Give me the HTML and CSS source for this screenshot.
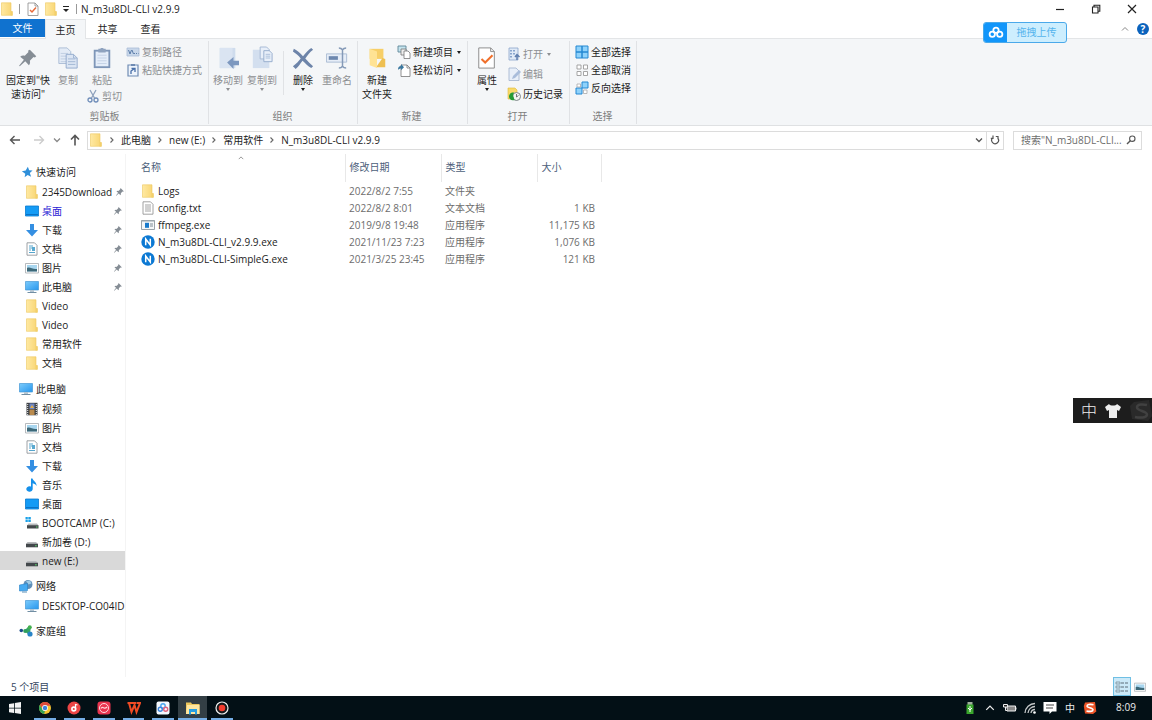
FILE: index.html
```html
<!DOCTYPE html>
<html lang="zh-CN">
<head>
<meta charset="utf-8">
<title>N_m3u8DL-CLI v2.9.9</title>
<link rel="stylesheet" href="styles.css">
</head>
<body>
<svg class="sprite" aria-hidden="true">
  <defs>
    <linearGradient id="gFolder" x1="0" x2="1"><stop offset="0" stop-color="#ffe9a2"/><stop offset="1" stop-color="#f8d572"/></linearGradient>
    <linearGradient id="gScreen" x1="0" y1="0" x2="1" y2="1"><stop offset="0" stop-color="#7ccbfb"/><stop offset="1" stop-color="#2797ee"/></linearGradient>
  </defs>
  <symbol id="folder" viewBox="0 0 14 14"><path d="M1.500 .8h9.500v8.700H12.300V13.300H1.500z" fill="url(#gFolder)" stroke="#ecc75f" stroke-width=".6"/><path d="M10.500 9.500h2v4h-2z" fill="#f3cf6a"/></symbol>
  <symbol id="bigfolder" viewBox="0 0 24 24"><path d="M4 2h15v11H4z" fill="#f7cf68"/><path d="M18 12l3 1v9H11z" fill="#eebf51"/><path d="M4 2l8 3v18l-8-3z" fill="#ffe394"/></symbol>
  <symbol id="doccheck" viewBox="0 0 14 14"><path d="M2 1h7l3 3v9.500H2z" fill="#fff" stroke="#8b8b8b" stroke-width=".8"/><path d="M9 1v3h3" fill="none" stroke="#8b8b8b" stroke-width=".8"/><path d="M4 8l2 2 4-4.500" fill="none" stroke="#e86a3a" stroke-width="1.500"/></symbol>
  <symbol id="bigcheck" viewBox="0 0 24 24"><path d="M3 1h13l4 4v18H3z" fill="#fff" stroke="#858585"/><path d="M16 1v4h4" fill="none" stroke="#858585"/><path d="M6 13l4 4 8-8" fill="none" stroke="#f0702c" stroke-width="2.200"/></symbol>
  <symbol id="pin" viewBox="0 0 24 24"><path d="M14 3l7 7-1.500 1.500-1.500-.5-4 4c.6 2 .2 3.500-1 5l-4-4.500L3 21l-.7-.6L7.500 14 3.500 10.500c1.500-1.200 3-1.500 5-1l4-4-.5-1.500z" fill="#858d95"/></symbol>
  <symbol id="copy" viewBox="0 0 24 24"><path d="M2 1h9l4 4v13H2z" fill="#e3ebf6" stroke="#a9bbd4"/><path d="M4 7h8M4 10h8M4 13h8M4 16h8" stroke="#bccce0"/><path d="M10 8h8l4 4v11H10z" fill="#dbe5f3" stroke="#91a9cc"/><path d="M18 8v4h4M12 13h8M12 16h8M12 19h8" fill="none" stroke="#9fb5d3"/></symbol>
  <symbol id="paste" viewBox="0 0 24 24"><path d="M3 3h18v20H3z" fill="#7e96b8"/><path d="M5 5h14v16H5z" fill="#e4edf9"/><path d="M8 2h2l1-1h2l1 1h2v4H8z" fill="#8fa3bf"/><path d="M7 9h10M7 12h10M7 15h10M7 18h10" stroke="#c3d1e5"/></symbol>
  <symbol id="cut" viewBox="0 0 14 14"><path d="M4 1l4.500 8M10 1L5.500 9" stroke="#8fa2bd" stroke-width="1.300" fill="none"/><circle cx="4" cy="11" r="2" fill="none" stroke="#6f8db9" stroke-width="1.300"/><circle cx="10" cy="11" r="2" fill="none" stroke="#6f8db9" stroke-width="1.300"/></symbol>
  <symbol id="path" viewBox="0 0 14 14"><path d="M1 3h12v8H1z" fill="#c8d7ea" stroke="#a9bdd7" stroke-width=".8"/><path d="M2.500 5l1.500 4 1.500-4M6 5l1.500 4M8 8.500h1M10 8.500h1M12 8.500h.5" fill="none" stroke="#5c7da9"/></symbol>
  <symbol id="pastelink" viewBox="0 0 14 14"><path d="M2 2h10v11H2z" fill="#eef4fc" stroke="#6f8bb3" stroke-width="1.200"/><path d="M5 1h4v2H5z" fill="#6f8bb3"/><path d="M5 11V8l3-2M5.500 5.500H9V9" fill="none" stroke="#486fa8" stroke-width="1.300"/></symbol>
  <symbol id="moveto" viewBox="0 0 24 24"><path d="M3 1h17v22H3z" fill="#cfdced"/><path d="M3 1h14v22H3z" fill="#dae4f2"/><path d="M11 17l7-6v4h6v5h-6v4z" fill="#7d98bf"/></symbol>
  <symbol id="copyto" viewBox="0 0 24 24"><path d="M2 3h18v20H2z" fill="#d3dfef"/><path d="M10 0h7l3 3v10H10z" fill="#e8eff9" stroke="#a3b7d3"/><path d="M14 4h6l3 3v9h-9z" fill="#e8eff9" stroke="#94abcc"/><path d="M16 8h5M16 10h5M16 12h5" stroke="#a9bdd9"/></symbol>
  <symbol id="delete" viewBox="0 0 24 24"><path d="M2 2c4 2 7 5 10 8 3-4 6-7 9-9l2 2c-4 3-6 6-8.500 9.500 3 3 5 5.500 8.500 8.500l-2 2c-4-2-6-5-9.500-8-2.500 3-4 6-7.500 9l-3-3c4-3 6-5.500 8.500-8.500C7 9 4 7 1 5z" fill="#6d84a9"/></symbol>
  <symbol id="rename" viewBox="0 0 24 24"><path d="M.5 7.500h22v9H.5z" fill="#e6edf7" stroke="#a9bad2"/><path d="M3 10h10v4H3z" fill="#6d88af"/><path d="M14 1c2 0 3 .5 4 2 1-1.500 2-2 4-2M18 3v18M14 23c2 0 3-.5 4-2 1 1.500 2 2 4 2" fill="none" stroke="#8499b7" stroke-width="1.600"/></symbol>
  <symbol id="newitem" viewBox="0 0 14 14"><path d="M1 1h8v6H1z" fill="#c5e4ee" stroke="#5e8797" stroke-width=".9"/><path d="M4 4h5v6H4z" fill="#eee" stroke="#777" stroke-width=".8"/><path d="M7 6h4l2 2v5.500H7z" fill="#fff" stroke="#777" stroke-width=".8"/></symbol>
  <symbol id="easy" viewBox="0 0 14 14"><path d="M4 2h6l3 3v8.500H4z" fill="#fff" stroke="#777" stroke-width=".8"/><path d="M10 2v3h3" fill="none" stroke="#777" stroke-width=".8"/><path d="M1 7c0-3 1-4 3-4V1l3 3.200-3 3V5.500C2.500 5.500 2 6 1 7z" fill="#3a789f"/></symbol>
  <symbol id="openapp" viewBox="0 0 14 14"><path d="M2 1h9v12H2z" fill="#e0eaf7" stroke="#8ba5ca" stroke-width=".8"/><path d="M4 3v8M7 3v6" stroke="#6c8fc0" stroke-width="1.500" stroke-dasharray="1.500 1.500"/><path d="M10 13V8M8 10l2-2.500 2.500 2.500" fill="none" stroke="#607fae" stroke-width="1.500"/></symbol>
  <symbol id="edit" viewBox="0 0 14 14"><path d="M2 1h7l3 3v9.500H2z" fill="#e8eff9" stroke="#9fb1cd" stroke-width=".8"/><path d="M5 12l1-3 6-6 2 2-6 6z" fill="#a9bddb"/></symbol>
  <symbol id="history" viewBox="0 0 14 14"><path d="M1 1h7l2 2v9H1z" fill="#f8da69" stroke="#dfb83b" stroke-width=".6"/><circle cx="9.500" cy="9.500" r="4" fill="#f3f5f3" stroke="#7c8487"/><path d="M9.500 7v3l2-1.500" fill="none" stroke="#666" stroke-width=".9"/><path d="M2 10c0-4 3-5 5-4.500L6 8l1.500 5C4 14 2.500 12 2 10z" fill="#259b35"/></symbol>
  <symbol id="selall" viewBox="0 0 14 14"><g fill="#8fd2fb" stroke="#2588d2"><path d="M1 1h6v6H1zM7 1h6v6H7zM1 7h6v6H1zM7 7h6v6H7z"/></g></symbol>
  <symbol id="selnone" viewBox="0 0 14 14"><path d="M2 2h4v4H2zM8.500 2h4v4h-4zM2 8.500h4v4H2zM8.500 8.500h4v4h-4z" fill="#fff" stroke="#9b9b9b" stroke-width=".9"/></symbol>
  <symbol id="selinv" viewBox="0 0 14 14"><path d="M7 1h6v6H7zM1 7h6v6H1z" fill="#8fd2fb" stroke="#2588d2"/><path d="M2 3h3.500v3H2zM8.500 9H12v3.500H8.500z" fill="#fff" stroke="#aaa" stroke-width=".8"/></symbol>
  <symbol id="left" viewBox="0 0 12 12"><path d="M11 6H1.500M5.500 2l-4 4 4 4" fill="none" stroke="currentColor" stroke-width="1.400"/></symbol>
  <symbol id="right" viewBox="0 0 12 12"><path d="M1 6h9.500M6.500 2l4 4-4 4" fill="none" stroke="currentColor" stroke-width="1.400"/></symbol>
  <symbol id="up" viewBox="0 0 12 12"><path d="M6 11.500V1.500M2 5.500l4-4 4 4" fill="none" stroke="currentColor" stroke-width="1.600"/></symbol>
  <symbol id="chev" viewBox="0 0 8 8"><path d="M1 2.500l3 3 3-3" fill="none" stroke="currentColor" stroke-width="1.300"/></symbol>
  <symbol id="chevup" viewBox="0 0 8 8"><path d="M1 5.500l3-3 3 3" fill="none" stroke="currentColor"/></symbol>
  <symbol id="crumb" viewBox="0 0 8 8"><path d="M2.500 1.500L5 4 2.500 6.500" fill="none" stroke="#666" stroke-width="1.100"/></symbol>
  <symbol id="refresh" viewBox="0 0 10 10"><path d="M7.800 3.200A3.400 3.400 0 1 1 3 2.600M3 .5v2.800H.8M5.800 1.500H8v2.700" fill="none" stroke="#555" stroke-width="1.200"/></symbol>
  <symbol id="search" viewBox="0 0 10 10"><circle cx="6.300" cy="3.700" r="2.700" fill="none" stroke="#555" stroke-width="1.100"/><path d="M4.300 5.700L1 9" stroke="#555" stroke-width="1.400"/></symbol>
  <symbol id="star" viewBox="0 0 14 14"><path d="M8 1l1.500 4 4 .3-3.200 2.800 1.500 4.400-4-2-3.600 2.700.8-4.300L1 6l4.500-.8z" fill="#2f8fd9"/></symbol>
  <symbol id="desktop" viewBox="0 0 14 14"><path d="M.5 2h13v10H.5z" fill="#149bf5" stroke="#0878ce" stroke-width=".8"/><path d="M1 10.500h12" stroke="#0b72c4"/></symbol>
  <symbol id="down" viewBox="0 0 14 14"><path d="M5 1h4v6h4l-6 6.500L1 7h4z" fill="#348fe2"/></symbol>
  <symbol id="docs" viewBox="0 0 14 14"><path d="M2 .8h7.500L12 3.300V13.200H2z" fill="#fff" stroke="#858c91" stroke-width=".8"/><path d="M4 4h4M4 6h6M4 8h2M4 10.500h6" stroke="#56a5cc"/><path d="M7 5h3v4H7z" fill="#59a9d0"/></symbol>
  <symbol id="pics" viewBox="0 0 14 14"><path d="M.5 2.500h13v9.500H.5z" fill="#fff" stroke="#a4a9ad" stroke-width=".8"/><path d="M2 4h10v6.500H2z" fill="#a8d6ef"/><path d="M2 7c3-1.500 5 1.500 10 1v2.500H2z" fill="#3d6979"/></symbol>
  <symbol id="pc" viewBox="0 0 14 14"><path d="M.5 1.500h13v8.500H.5z" fill="url(#gScreen)" stroke="#4598d5" stroke-width=".7"/><path d="M5 10h4v2H5z" fill="#b5c6d3"/><path d="M2.500 12.500h9" stroke="#718ea3"/></symbol>
  <symbol id="video" viewBox="0 0 14 14"><path d="M1.500 .8h11v12.500h-11z" fill="#3d4044"/><path d="M2.700 2v11M11.300 2v11" stroke="#eee" stroke-dasharray="1 1"/><path d="M4.500 1.500h5V7h-5z" fill="#6c86c5"/><path d="M4.500 7.500h5V13h-5z" fill="#b98a4d"/><path d="M5 6l2-3 2 3z" fill="#e1ad47"/></symbol>
  <symbol id="music" viewBox="0 0 14 14"><path d="M6 .5h1.500c.5 2.500 4.500 3.500 4 7.500-.5-1.500-2-2.300-3.800-2.700v5.500A3.200 2.800 0 1 1 6 8.500z" fill="#1590ea"/></symbol>
  <symbol id="drive" viewBox="0 0 14 14"><path d="M2.500 7h8.500l2 2H1z" fill="#b7babc"/><path d="M1 8.800h12V12.300H1z" fill="#43484b"/><path d="M10 10.800h1.800" stroke="#59d36b"/></symbol>
  <symbol id="windrive" viewBox="0 0 14 14"><path d="M.5 1h2.300v2.300H.5zM3.300 1h2.500v2.300H3.300zM.5 3.800h2.300v2.300H.5zM3.300 3.800h2.500v2.300H3.300z" fill="#1aa1e8"/><path d="M3.500 7.500H12l1.500 2H2z" fill="#b7babc"/><path d="M2 9.200h11.500v3.300H2z" fill="#43484b"/><path d="M11 11h1.500" stroke="#59d36b"/></symbol>
  <symbol id="net" viewBox="0 0 14 14"><circle cx="9" cy="5.500" r="4.500" fill="#5f8fb8"/><path d="M7 2l4-.5 1.500 3-3 1z" fill="#9fcbe6"/><path d="M.5 6l8-1.500v7l-8 .5z" fill="#45aaf1" stroke="#2581c7" stroke-width=".6"/><path d="M3 13h5" stroke="#5a90b8"/></symbol>
  <symbol id="home" viewBox="0 0 14 14"><circle cx="2.300" cy="6.500" r="1.800" fill="#1c4c8c"/><path d="M5 7l5-5 2 1.500L10.500 11z" fill="#36a564"/><circle cx="10.800" cy="3.300" r="2" fill="#45b04f"/><circle cx="6.200" cy="7" r="2" fill="#2f9e5d"/><circle cx="11" cy="10" r="2.600" fill="#2884c7"/></symbol>
  <symbol id="txt" viewBox="0 0 14 14"><path d="M2 .8h7.500L12 3.300V13.200H2z" fill="#fff" stroke="#8c8c8c" stroke-width=".8"/><path d="M4 4h6M4 6h6M4 8h6M4 10h6" stroke="#999" stroke-width=".9"/></symbol>
  <symbol id="exe" viewBox="0 0 14 14"><path d="M.5 2.500h13v9H.5z" fill="#f5f7f8" stroke="#8e989f" stroke-width=".9"/><path d="M.5 3h13" stroke="#9ba5ab"/><path d="M4 4.800h4v5H4z" fill="#187acb"/><path d="M9 6h3M9 8h3" stroke="#7e8c96"/></symbol>
  <symbol id="nexe" viewBox="0 0 14 14"><circle cx="7" cy="7" r="6.700" fill="#0c79d3"/><path d="M4.700 10.200V4l4.600 6V3.800" fill="none" stroke="#fff" stroke-width="1.500"/></symbol>
  <symbol id="cloud" viewBox="0 0 18 14"><g fill="none" stroke="#fff" stroke-width="2"><circle cx="9" cy="4.500" r="3"/><circle cx="4.800" cy="9" r="3"/><circle cx="13.200" cy="9" r="3"/></g></symbol>
</svg>

<header class="titlebar">
  <svg class="i14"><use href="#folder"/></svg>
  <span class="tsep"></span>
  <button class="bare" aria-label="属性"><svg class="i14"><use href="#doccheck"/></svg></button>
  <button class="bare" aria-label="新建文件夹"><svg class="i14"><use href="#folder"/></svg></button>
  <button class="bare qa" aria-label="自定义快速访问工具栏"><svg class="i8" viewBox="0 0 8 8"><path d="M1 1.500h6" stroke="#222"/><path d="M1 4h6L4 7z" fill="#222"/></svg></button>
  <span class="tsep tsep-end"></span>
  <h1 class="title">N_m3u8DL-CLI v2.9.9</h1>
  <div class="winctl">
    <button class="bare" aria-label="最小化"><svg class="i10" viewBox="0 0 10 10"><path d="M1 5.500h8" stroke="#222" stroke-width="1.200"/></svg></button>
    <button class="bare" aria-label="还原"><svg class="i10" viewBox="0 0 10 10"><path d="M1.500 3h5.500v6H1.500zM3 3V1.200h5.800v6H7" fill="none" stroke="#222" stroke-width="1.100"/></svg></button>
    <button class="bare" aria-label="关闭"><svg class="i10" viewBox="0 0 10 10"><path d="M1 1l8 8M9 1L1 9" stroke="#222" stroke-width="1.200"/></svg></button>
  </div>
</header>

<nav class="tabs">
  <button class="tab file">文件</button>
  <button class="tab active">主页</button>
  <button class="tab">共享</button>
  <button class="tab">查看</button>
  <div class="tabs-end">
    <button class="bare" aria-label="折叠功能区"><svg class="i8 grey"><use href="#chevup"/></svg></button>
    <button class="help" aria-label="帮助">?</button>
  </div>
  <button class="upload"><span class="upload-logo"><svg class="i-cloud"><use href="#cloud"/></svg></span><span class="upload-text">拖拽上传</span></button>
</nav>

<section class="ribbon">
  <div class="group g-clip">
    <div class="tools">
      <button class="big w48"><svg class="i22"><use href="#pin"/></svg><span>固定到"快<br>速访问"</span></button>
      <button class="big off w32"><svg class="i22"><use href="#copy"/></svg><span>复制</span></button>
      <div class="stack">
        <button class="big off w36"><svg class="i22"><use href="#paste"/></svg><span>粘贴</span></button>
        <button class="small off"><svg class="i14"><use href="#cut"/></svg>剪切</button>
      </div>
      <div class="list">
        <button class="small off"><svg class="i14"><use href="#path"/></svg>复制路径</button>
        <button class="small off"><svg class="i14"><use href="#pastelink"/></svg>粘贴快捷方式</button>
      </div>
    </div>
    <div class="glabel">剪贴板</div>
  </div>
  <div class="group g-org">
    <div class="tools">
      <button class="big off w34"><svg class="i22"><use href="#moveto"/></svg><span>移动到</span><i class="caret"></i></button>
      <button class="big off w34"><svg class="i22"><use href="#copyto"/></svg><span>复制到</span><i class="caret"></i></button>
      <span class="vsep"></span>
      <button class="big w34"><svg class="i22"><use href="#delete"/></svg><span>删除</span><i class="caret"></i></button>
      <button class="big off w34"><svg class="i22"><use href="#rename"/></svg><span>重命名</span></button>
    </div>
    <div class="glabel">组织</div>
  </div>
  <div class="group g-new">
    <div class="tools">
      <button class="big w36"><svg class="i22"><use href="#bigfolder"/></svg><span>新建<br>文件夹</span></button>
      <div class="list">
        <button class="small"><svg class="i14"><use href="#newitem"/></svg>新建项目<i class="caret"></i></button>
        <button class="small"><svg class="i14"><use href="#easy"/></svg>轻松访问<i class="caret"></i></button>
      </div>
    </div>
    <div class="glabel">新建</div>
  </div>
  <div class="group g-open">
    <div class="tools">
      <button class="big w36"><svg class="i22"><use href="#bigcheck"/></svg><span>属性</span><i class="caret"></i></button>
      <div class="list loose">
        <button class="small off"><svg class="i14"><use href="#openapp"/></svg>打开<i class="caret"></i></button>
        <button class="small off"><svg class="i14"><use href="#edit"/></svg>编辑</button>
        <button class="small"><svg class="i14"><use href="#history"/></svg>历史记录</button>
      </div>
    </div>
    <div class="glabel">打开</div>
  </div>
  <div class="group g-sel">
    <div class="tools">
      <div class="list">
        <button class="small"><svg class="i14"><use href="#selall"/></svg>全部选择</button>
        <button class="small"><svg class="i14"><use href="#selnone"/></svg>全部取消</button>
        <button class="small"><svg class="i14"><use href="#selinv"/></svg>反向选择</button>
      </div>
    </div>
    <div class="glabel">选择</div>
  </div>
</section>

<div class="address-row">
  <div class="arrows">
    <button class="bare" aria-label="后退"><svg class="i12 dark"><use href="#left"/></svg></button>
    <button class="bare" aria-label="前进"><svg class="i12 faint"><use href="#right"/></svg></button>
    <button class="bare" aria-label="最近位置"><svg class="i8 grey"><use href="#chev"/></svg></button>
    <button class="bare" aria-label="上移"><svg class="i12 dark"><use href="#up"/></svg></button>
  </div>
  <div class="address">
    <svg class="i14"><use href="#folder"/></svg>
    <svg class="i8"><use href="#crumb"/></svg><a href="#pc">此电脑</a>
    <svg class="i8"><use href="#crumb"/></svg><a href="#e">new (E:)</a>
    <svg class="i8"><use href="#crumb"/></svg><a href="#soft">常用软件</a>
    <svg class="i8"><use href="#crumb"/></svg><a href="#cli">N_m3u8DL-CLI v2.9.9</a>
    <div class="address-end">
      <button class="bare" aria-label="以前的位置"><svg class="i8 dark"><use href="#chev"/></svg></button>
      <button class="bare refresh" aria-label="刷新"><svg class="i10"><use href="#refresh"/></svg></button>
    </div>
  </div>
  <form class="search">
    <input type="text" aria-label="搜索" placeholder='搜索"N_m3u8DL-CLI...'>
    <button class="bare" type="button" aria-label="开始搜索"><svg class="i10"><use href="#search"/></svg></button>
  </form>
</div>

<div class="body">
  <nav class="side">
    <div class="sgroup first">
      <a class="root" href="#q"><svg class="i12"><use href="#star"/></svg><span>快速访问</span></a>
      <a href="#q1"><svg class="i14"><use href="#folder"/></svg><span>2345Download</span><svg class="pin"><use href="#pin"/></svg></a>
      <a class="blue" href="#q2"><svg class="i14"><use href="#desktop"/></svg><span>桌面</span><svg class="pin"><use href="#pin"/></svg></a>
      <a href="#q3"><svg class="i14"><use href="#down"/></svg><span>下载</span><svg class="pin"><use href="#pin"/></svg></a>
      <a href="#q4"><svg class="i14"><use href="#docs"/></svg><span>文档</span><svg class="pin"><use href="#pin"/></svg></a>
      <a href="#q5"><svg class="i14"><use href="#pics"/></svg><span>图片</span><svg class="pin"><use href="#pin"/></svg></a>
      <a href="#q6"><svg class="i14"><use href="#pc"/></svg><span>此电脑</span><svg class="pin"><use href="#pin"/></svg></a>
      <a href="#q7"><svg class="i14"><use href="#folder"/></svg><span>Video</span></a>
      <a href="#q8"><svg class="i14"><use href="#folder"/></svg><span>Video</span></a>
      <a href="#q9"><svg class="i14"><use href="#folder"/></svg><span>常用软件</span></a>
      <a href="#q10"><svg class="i14"><use href="#folder"/></svg><span>文档</span></a>
    </div>
    <div class="sgroup">
      <a class="root" href="#p"><svg class="i14"><use href="#pc"/></svg><span>此电脑</span></a>
      <a href="#p1"><svg class="i14"><use href="#video"/></svg><span>视频</span></a>
      <a href="#p2"><svg class="i14"><use href="#pics"/></svg><span>图片</span></a>
      <a href="#p3"><svg class="i14"><use href="#docs"/></svg><span>文档</span></a>
      <a href="#p4"><svg class="i14"><use href="#down"/></svg><span>下载</span></a>
      <a href="#p5"><svg class="i14"><use href="#music"/></svg><span>音乐</span></a>
      <a href="#p6"><svg class="i14"><use href="#desktop"/></svg><span>桌面</span></a>
      <a href="#p7"><svg class="i14"><use href="#windrive"/></svg><span>BOOTCAMP (C:)</span></a>
      <a href="#p8"><svg class="i14"><use href="#drive"/></svg><span>新加卷 (D:)</span></a>
      <a class="selected" href="#p9"><svg class="i14"><use href="#drive"/></svg><span>new (E:)</span></a>
    </div>
    <div class="sgroup">
      <a class="root" href="#n"><svg class="i14"><use href="#net"/></svg><span>网络</span></a>
      <a href="#n1"><svg class="i14"><use href="#pc"/></svg><span>DESKTOP-CO04ID</span></a>
    </div>
    <div class="sgroup">
      <a class="root" href="#h"><svg class="i14"><use href="#home"/></svg><span>家庭组</span></a>
    </div>
  </nav>
  <main class="files">
    <table>
      <colgroup><col class="c-name"><col class="c-mid"><col class="c-mid"><col class="c-size"></colgroup>
      <thead><tr><th>名称<svg class="sort"><use href="#chevup"/></svg></th><th>修改日期</th><th>类型</th><th>大小</th></tr></thead>
      <tbody>
        <tr><td><span class="fname"><svg class="i14"><use href="#folder"/></svg>Logs</span></td><td>2022/8/2 7:55</td><td>文件夹</td><td></td></tr>
        <tr><td><span class="fname"><svg class="i14"><use href="#txt"/></svg>config.txt</span></td><td>2022/8/2 8:01</td><td>文本文档</td><td>1 KB</td></tr>
        <tr><td><span class="fname"><svg class="i14"><use href="#exe"/></svg>ffmpeg.exe</span></td><td>2019/9/8 19:48</td><td>应用程序</td><td>11,175 KB</td></tr>
        <tr><td><span class="fname"><svg class="i14"><use href="#nexe"/></svg>N_m3u8DL-CLI_v2.9.9.exe</span></td><td>2021/11/23 7:23</td><td>应用程序</td><td>1,076 KB</td></tr>
        <tr><td><span class="fname"><svg class="i14"><use href="#nexe"/></svg>N_m3u8DL-CLI-SimpleG.exe</span></td><td>2021/3/25 23:45</td><td>应用程序</td><td>121 KB</td></tr>
      </tbody>
    </table>
  </main>
</div>

<div class="status">
  <span>5 个项目</span>
  <div class="views">
    <button class="view on" aria-label="详细信息"><svg class="i14" viewBox="0 0 14 14"><path d="M1 2h4v2H1zM1 6h4v2H1zM1 10h4v2H1z" fill="none" stroke="#7c8d98" stroke-width=".8"/><path d="M6 3h3M10 3h3M6 7h3M10 7h3M6 11h3M10 11h3" stroke="#5d6d78"/></svg></button>
    <button class="view" aria-label="大图标"><svg class="i12"><use href="#pics"/></svg></button>
  </div>
</div>

<div class="ime"><span>中</span><svg class="shirt" viewBox="0 0 18 16"><path d="M5 1c1 2 7 2 8 0l4 3-2 4-2-1v8H5V7L3 8 1 4z" fill="#eee"/></svg><svg class="sogou" viewBox="0 0 24 24"><path d="M5 3l15-2 3 16-4 5-16-2-2-13z" fill="#2a2a2a"/><path d="M18 6c-4-1-10-1-10 2.500S18 12 18 15.500 11 19 6 18" fill="none" stroke="#414141" stroke-width="2.500"/></svg></div>

<footer class="taskbar">
  <button class="start" aria-label="开始"><svg class="i14" viewBox="0 0 14 14"><path d="M1 3l5-.8v4.500H1zM6.800 2L13 1v5.700H6.800zM1 7.500h5V12l-5-.8zM6.800 7.500H13V13l-6.200-1z" fill="#f3f3f3"/></svg></button>
  <div class="apps">
    <button class="app" aria-label="Chrome"><svg class="i14" viewBox="0 0 14 14"><circle cx="7" cy="7" r="6" fill="#f4c430"/><path d="M1.800 4A6 6 0 0 1 12.500 4.700H7L4.500 8z" fill="#de4a3b"/><path d="M1.800 4l3 5L7 10.500 6 13A6 6 0 0 1 1.800 4z" fill="#35a457"/><circle cx="7" cy="7" r="2.900" fill="#fff"/><circle cx="7" cy="7" r="2.200" fill="#3f80dd"/></svg></button>
    <button class="app" aria-label="音乐"><svg class="i14" viewBox="0 0 14 14"><circle cx="7" cy="7" r="6.500" fill="#ec4545"/><circle cx="6.800" cy="8" r="1.900" fill="none" stroke="#fff" stroke-width="1.600"/><path d="M8.500 8V3.500l2 .5" fill="none" stroke="#fff" stroke-width="1.200"/></svg></button>
    <button class="app" aria-label="视频"><svg class="i14" viewBox="0 0 14 14"><rect x=".5" y=".5" width="13" height="13" rx="3" fill="#e9344f"/><circle cx="7" cy="7" r="4.500" fill="none" stroke="#ffd9de"/><path d="M4 7.500c1-2 2-1 3-.5s2 0 3-1" fill="none" stroke="#ffd9de" stroke-width="1.200"/></svg></button>
    <button class="app" aria-label="WPS"><svg class="i14" viewBox="0 0 14 14"><path d="M.5 2H9M2 2l2.500 9L7.500 4l2 7 3.500-9H9.500" fill="none" stroke="#ef4b24" stroke-width="2"/></svg></button>
    <button class="app" aria-label="网盘"><svg class="i14" viewBox="0 0 14 14"><rect x=".5" y=".5" width="13" height="13" rx="2" fill="#f4f9ff"/><g fill="none" stroke-width="1.400"><circle cx="7" cy="5" r="2.200" stroke="#4ca8f0"/><circle cx="4.300" cy="8.300" r="2" stroke="#3b86df"/><circle cx="9.700" cy="8.300" r="2" stroke="#e0627e"/></g></svg></button>
    <button class="app current" aria-label="文件资源管理器"><svg class="i14" viewBox="0 0 14 14"><path d="M0 1.500h5l1 1.500h7.500v10H0z" fill="#edc75d"/><path d="M1 4h12.500v9H0z" fill="#ffe7a0"/><path d="M3 8h8v5.500H9V11H5v2.500H3z" fill="#299fe0"/></svg></button>
    <button class="app" aria-label="录屏"><svg class="i14" viewBox="0 0 14 14"><circle cx="7" cy="7" r="6" fill="#16191b" stroke="#eee" stroke-width="1.200"/><circle cx="7" cy="7" r="3.300" fill="#f33b2d"/></svg></button>
  </div>
  <div class="tray">
    <button aria-label="USB"><svg class="i14" viewBox="0 0 14 14"><path d="M4.500 1h5v3h-5z" fill="#9fae9c"/><path d="M3.500 3.500h7v9.500h-7z" fill="#39a52c"/><path d="M7 5v6M5 7l2 2 2-2" fill="none" stroke="#fff"/></svg></button>
    <button aria-label="显示隐藏的图标"><svg class="i10 white"><use href="#chevup"/></svg></button>
    <button aria-label="电池"><svg class="i14" viewBox="0 0 14 14"><path d="M4 5h8.500v5H4z" fill="#888" stroke="#eee"/><path d="M13 6.500v2" stroke="#eee"/><path d="M.5 3.500h4v2.500h-4zM2.500 6v3.500h2" fill="#222" stroke="#eee"/></svg></button>
    <button aria-label="网络"><svg class="i14" viewBox="0 0 14 14"><path d="M2 12A10 10 0 0 1 12 2.500M5 12A7 7 0 0 1 12 5.500M8 12A4 4 0 0 1 12 8.500" fill="none" stroke="#c4c7c8" stroke-width="1.300"/><circle cx="11.500" cy="11.500" r="1.300" fill="#fff"/></svg></button>
    <button aria-label="通知"><svg class="i14" viewBox="0 0 14 14"><path d="M.5 1h13v9.500H9L6.500 13v-2.500h-6z" fill="#fff"/><path d="M3 4h8M3 7h7" stroke="#444"/></svg></button>
    <button>中</button>
    <button aria-label="搜狗输入法"><svg class="i14" viewBox="0 0 14 14"><path d="M2 1.500l10-.5 1.300 9.500L10 13 2 12.500.8 5z" fill="#ec5427"/><path d="M10.500 3.800C7 3 4 3.500 4 5.200s6 1.500 6 3.500-3.500 2-6.500 1.200" fill="none" stroke="#fff" stroke-width="1.600"/></svg></button>
  </div>
  <time class="clock">8:09</time>
</footer>
</body>
</html>
```
FILE: styles.css
```css
* { box-sizing: border-box; }
body {
  margin: 0;
  height: 100vh;
  display: flex;
  flex-direction: column;
  overflow: hidden;
  position: relative;
  background: #fff;
  color: #1c1c1c;
  font: 10px/14px "Open Sans", "Noto Sans CJK SC", sans-serif;
}
button, input { font: inherit; color: inherit; padding: 0; border: 0; background: none; }
button { display: flex; align-items: center; white-space: nowrap; }
a { color: inherit; text-decoration: none; }
svg { flex: none; display: block; }
.sprite { position: absolute; width: 0; height: 0; }
.i8 { width: 8px; height: 8px; }
.i10 { width: 10px; height: 10px; }
.i12 { width: 12px; height: 12px; }
.i14 { width: 14px; height: 14px; }
.i22 { width: 22px; height: 24px; }
.dark { color: #555; }
.grey { color: #888; }
.faint { color: #ccc; }
.white { color: #eee; }

/* Title bar */
.titlebar { display: flex; align-items: center; height: 19px; flex: none; padding-bottom: 2px; }
.tsep { width: 1px; height: 10px; background: #999; margin: 0 6px 0 5px; }
.titlebar .bare + .bare { margin-left: 4px; }
.titlebar .qa { width: 8px; }
.tsep-end { margin: 0 4px 0 6px; }
.title { margin: 0; font-size: 10px; font-weight: 400; flex: 1; }
.winctl { display: flex; gap: 26px; padding-right: 15px; }
.winctl .bare + .bare { margin: 0; }

/* Tabs */
.tabs { display: flex; height: 20px; flex: none; position: relative; border-bottom: 1px solid #e3e5e7; }
.tab { width: 43px; justify-content: center; }
.tab.file { width: 45px; height: 18px; background: #1072cf; color: #fff; }
.tab.active { width: 41px; height: 20px; background: #f4f6f8; border: 1px solid #e3e5e7; border-bottom: 0; }
.tabs-end { margin-left: auto; display: flex; align-items: center; gap: 8px; padding-right: 3px; }
.help { width: 12px; height: 12px; border-radius: 50%; background: #0b63bd; color: #fff; justify-content: center; font-weight: 700; }
.upload { position: absolute; right: 85px; top: 3px; height: 21px; width: 84px; border: 1px solid #4aa9ea; border-radius: 3px; background: #cdeefe; overflow: hidden; align-items: stretch; z-index: 1; }
.upload-logo { width: 23px; background: #1296fa; display: flex; align-items: center; justify-content: center; }
.i-cloud { width: 16px; height: 13px; }
.upload-text { flex: 1; color: #55b4ed; line-height: 19px; }

/* Ribbon */
.ribbon { display: flex; flex: none; background: #f4f6f8; border-bottom: 1px solid #dfe1e3; padding: 2px 0 1px; }
.group { border-right: 1px solid #e0e2e5; display: flex; flex-direction: column; justify-content: space-between; height: 83px; }
.g-clip { width: 209px; padding-left: 4px; }
.g-org { width: 149px; padding-left: 2px; }
.g-new { width: 110px; padding-left: 1px; }
.g-open { width: 102px; padding-left: 1px; }
.g-sel { width: 67px; padding-left: 4px; }
.g-sel .glabel { padding-right: 5px; }
.tools { display: flex; align-items: flex-start; padding-top: 5px; }
.glabel { text-align: center; color: #7e7e7e; line-height: 16px; padding-right: 3px; }
.big { flex-direction: column; text-align: center; }
.big span { margin-top: 3px; }
.big .caret { margin-top: 1px; }
.w32 { width: 32px; }
.w34 { width: 34px; }
.w36 { width: 36px; }
.w48 { width: 48px; }
.off { color: #8d8f92; }
.stack { width: 42px; }
.stack .small { padding-left: 2px; margin-top: 2px; }
.list { display: flex; flex-direction: column; }
.list .small { height: 18px; }
.g-clip .list, .g-org .list, .g-new .list, .g-sel .list { margin-top: -3px; }
.g-new .list, .g-open .list { margin-left: 2px; }
.g-sel .list { margin-left: 1px; }
.g-open .loose .small { height: 20px; }
.g-open .loose { margin-top: -2px; }
.small { gap: 2px; }
.caret { border: 2px solid transparent; border-top: 3px solid currentColor; border-bottom: 0; }
.small .caret { margin-left: 2px; }
.vsep { width: 1px; height: 44px; background: #e0e2e5; margin: 5px 2px 0 4px; }

/* Address row */
.address-row { display: flex; align-items: center; height: 28px; flex: none; padding-right: 10px; }
.arrows { display: flex; align-items: center; gap: 8px; padding: 0 6px 0 9px; }
.arrows .bare:nth-child(2) { margin-left: 4px; }
.address { display: flex; align-items: center; gap: 5px; flex: 1; height: 19px; border: 1px solid #dcdcdc; padding-left: 1px; }
.address-end { margin-left: auto; display: flex; align-items: stretch; height: 100%; }
.refresh { border-left: 1px solid #dcdcdc; margin-left: 3px; padding: 0 3px; }
.search { display: flex; align-items: center; width: 129px; height: 19px; border: 1px solid #dcdcdc; margin-left: 9px; padding: 0 5px 0 7px; }
.search input { flex: 1; min-width: 0; outline: 0; }
.search input::placeholder { color: #6d6d6d; opacity: 1; }

/* Navigation pane and file list */
.body { display: flex; flex: 1; min-height: 0; }
.side { width: 126px; border-right: 1px solid #f4f4f4; padding-top: 8px; overflow: hidden; }
.sgroup { margin-bottom: 6px; }
.sgroup.first { margin-bottom: 7px; }
.side a { display: flex; align-items: center; height: 19px; padding-left: 25px; gap: 3px; white-space: nowrap; overflow: hidden; }
.side a.root { height: 20px; padding-left: 19px; }
.side a.blue { color: #2a22d4; }
.side a.selected { background: #d9d9d9; }
.side .i12 { margin-left: 2px; }
.pin { width: 10px; height: 10px; margin-left: auto; margin-right: 2px; }
.files { flex: 1; }
table { border-collapse: collapse; table-layout: fixed; width: 475px; }
.c-name { width: 219px; }
.c-mid { width: 96px; }
.c-size { width: 64px; }
th { position: relative; height: 28px; text-align: left; font-weight: 400; color: #4c607a; padding: 0 0 2px 4px; border-right: 1px solid #e8e8e8; }
th:first-child, td:first-child { padding-left: 15px; }
.sort { position: absolute; left: 111px; top: 1px; width: 8px; height: 6px; color: #777; }
td { height: 17px; padding: 0 0 0 4px; color: #6d6d6d; }
td:first-child { color: #1c1c1c; }
td:last-child { text-align: right; padding-right: 6px; }
.fname { display: flex; align-items: center; gap: 3px; }

/* Status bar */
.status { display: flex; align-items: center; justify-content: space-between; height: 19px; flex: none; padding: 0 3px 0 11px; color: #34465e; }
.views { display: flex; }
.view { width: 18px; height: 19px; justify-content: center; }
.view.on { background: #cbe9f8; border: 1px solid #6fbfe4; }

/* Input method bar */
.ime { position: absolute; right: 0; top: 398px; width: 79px; height: 25px; background: #1d1d1d; color: #eee; display: flex; align-items: center; gap: 7px; padding-left: 8px; font-size: 16px; font-weight: 300; overflow: hidden; }
.shirt { width: 18px; height: 16px; }
.sogou { width: 24px; height: 24px; }

/* Taskbar */
.taskbar { display: flex; height: 24px; flex: none; background: #031016; color: #eee; }
.start { width: 30px; justify-content: center; }
.apps { display: flex; width: 207px; }
.app { flex: 1; justify-content: center; position: relative; }
.app::after { content: ""; position: absolute; left: 4px; right: 4px; bottom: 0; height: 2px; background: #75aee6; }
.app.current { background: #333f45; }
.app.current::after { left: 0; right: 0; }
.tray { margin-left: auto; display: flex; }
.tray button { width: 20px; justify-content: center; }
.clock { width: 52px; text-align: center; line-height: 22px; }
```
